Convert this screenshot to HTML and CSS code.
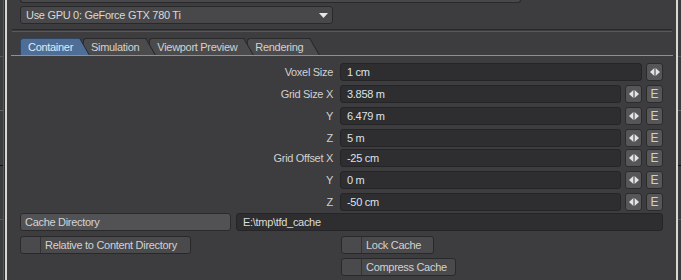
FILE: index.html
```html
<!DOCTYPE html>
<html>
<head>
<meta charset="utf-8">
<link rel="stylesheet" href="styles.css">
</head>
<body>
<div class="app">
  <div class="side">
    <div class="seg s1"></div>
    <div class="seg s2"></div>
    <div class="seg s3"></div>
    <div class="seg s4"></div>
  </div>
  <div class="rail rail-left"></div>
  <div class="panel">
    <div class="topbox"></div>
    <div class="dropdown">
      <span>Use GPU 0: GeForce GTX 780 Ti</span>
      <svg class="caret" width="9" height="5" viewBox="0 0 9 5"><path d="M0 0h9L4.5 5z" fill="#e6e6e6"/></svg>
    </div>
    <div class="groove"></div>
    <div class="tabs">
      <div class="tab active t1">Container</div>
      <div class="tab t2">Simulation</div>
      <div class="tab t3">Viewport Preview</div>
      <div class="tab t4">Rendering</div>
    </div>
    <div class="tabline"></div>

    <div class="group first">
      <div class="row">
        <div class="label">Voxel Size</div>
        <div class="field">1 cm</div>
        <div class="btn"><svg width="10" height="8" viewBox="0 0 10 8"><path d="M4.4 0v8L0 4z M5.6 0v8L10 4z" fill="#e4e4e4"/></svg></div>
      </div>
      <div class="row">
        <div class="label">Grid Size X</div>
        <div class="field">3.858 m</div>
        <div class="btn"><svg width="10" height="8" viewBox="0 0 10 8"><path d="M4.4 0v8L0 4z M5.6 0v8L10 4z" fill="#e4e4e4"/></svg></div>
        <div class="btn">E</div>
      </div>
      <div class="row">
        <div class="label">Y</div>
        <div class="field">6.479 m</div>
        <div class="btn"><svg width="10" height="8" viewBox="0 0 10 8"><path d="M4.4 0v8L0 4z M5.6 0v8L10 4z" fill="#e4e4e4"/></svg></div>
        <div class="btn">E</div>
      </div>
      <div class="row">
        <div class="label">Z</div>
        <div class="field">5 m</div>
        <div class="btn"><svg width="10" height="8" viewBox="0 0 10 8"><path d="M4.4 0v8L0 4z M5.6 0v8L10 4z" fill="#e4e4e4"/></svg></div>
        <div class="btn">E</div>
      </div>
    </div>

    <div class="group">
      <div class="row">
        <div class="label">Grid Offset X</div>
        <div class="field">-25 cm</div>
        <div class="btn"><svg width="10" height="8" viewBox="0 0 10 8"><path d="M4.4 0v8L0 4z M5.6 0v8L10 4z" fill="#e4e4e4"/></svg></div>
        <div class="btn">E</div>
      </div>
      <div class="row">
        <div class="label">Y</div>
        <div class="field">0 m</div>
        <div class="btn"><svg width="10" height="8" viewBox="0 0 10 8"><path d="M4.4 0v8L0 4z M5.6 0v8L10 4z" fill="#e4e4e4"/></svg></div>
        <div class="btn">E</div>
      </div>
      <div class="row">
        <div class="label">Z</div>
        <div class="field">-50 cm</div>
        <div class="btn"><svg width="10" height="8" viewBox="0 0 10 8"><path d="M4.4 0v8L0 4z M5.6 0v8L10 4z" fill="#e4e4e4"/></svg></div>
        <div class="btn">E</div>
      </div>
    </div>

    <div class="group">
      <div class="row">
        <div class="cache-btn">Cache Directory</div>
        <div class="field path">E:\tmp\tfd_cache</div>
      </div>
    </div>

    <div class="checks">
      <div class="check w-rel"><span class="box"></span><span class="ctext">Relative to Content Directory</span></div>
      <div class="check w-lock"><span class="box"></span><span class="ctext">Lock Cache</span></div>
      <div class="check w-comp c2"><span class="box"></span><span class="ctext">Compress Cache</span></div>
    </div>
  </div>
  <div class="rail rail-right"></div>
  <div class="side">
    <div class="seg s1"></div>
    <div class="seg s2"></div>
    <div class="seg s3"></div>
    <div class="seg s4"></div>
  </div>
</div>
</body>
</html>
```

FILE: styles.css
```css
* { box-sizing: border-box; }
html, body { margin: 0; padding: 0; }
body {
  background: #3d3d3f;
  font-family: "Liberation Sans", Arial, sans-serif;
  font-size: 11px;
  letter-spacing: -0.3px;
  color: #d2d2d2;
  overflow: hidden;
}
.app { display: flex; height: 280px; }

.side { width: 3px; background: #3b3c3f; display: flex; flex-direction: column; }
.seg { border-bottom: 1px solid #57585b; }
.s1 { height: 57px; }
.s2 { height: 54px; border-bottom-color: #66676a; }
.s3 { height: 55px; border-bottom-color: #111; }
.s4 { height: 54px; }

.rail-left { width: 4px; border-left: 1px solid #56575a; border-right: 2px solid #d8d8d0; background: #2e2e30; }
.rail-right { width: 2px; background: #d8d8d0; }

.panel {
  width: 669px;
  padding: 0 13px;
  display: flex;
  flex-direction: column;
  align-items: stretch;
}

.topbox {
  width: 501px;
  height: 3px;
  background: #48484a;
  border: 1px solid #29292b;
  border-top: 0;
  border-radius: 0 0 3px 3px;
}

.dropdown {
  margin-top: 3px;
  width: 313px;
  height: 18px;
  background: #48484a;
  border: 1px solid #29292b;
  border-radius: 3px;
  display: flex;
  align-items: center;
  justify-content: space-between;
  padding: 0 4px 0 5px;
  color: #d8d8d8;
}
.caret { display: block; }

.groove {
  margin: 5px -9px 0 -8px;
  height: 3px;
  border-top: 1px solid #28282a;
  border-bottom: 1px solid #58585a;
}

.tabs { margin-top: 6px; display: flex; height: 17px; }
.tab {
  position: relative;
  height: 17px;
  padding: 0 3px 0 7px;
  line-height: 16px;
  background: #4b4b4d;
  border: 1px solid #2a2a2c;
  border-right: 0;
  border-bottom: 0;
  border-radius: 3px 0 0 0;
  margin-right: 7px;
  color: #d2d2d2;
}
.tab::after {
  content: "";
  position: absolute;
  z-index: -1;
  top: -1px;
  bottom: 0;
  right: -4px;
  width: 14px;
  background: inherit;
  border-top: 1px solid #2a2a2c;
  border-right: 1px solid #222224;
  transform: skewX(30deg);
  transform-origin: 0 0;
}
.tab.active { background: #4e6e97; border-color: #33455e; color: #e4e9f1; }
.tab.active::after { border-top-color: #33455e; border-right-color: #222224; }
.t1 { z-index: 4; }
.t2 { z-index: 3; }
.t3 { z-index: 2; }
.t4 { z-index: 1; }

.tabline { margin: 0 -10px 0 -9px; height: 1px; background: #909092; }

.group { display: flex; flex-direction: column; gap: 4px; margin-top: 2px; }
.group.first { margin-top: 7px; }

.row { display: flex; height: 18px; }
.label {
  width: 313px;
  margin-right: 7px;
  text-align: right;
  line-height: 18px;
  color: #d0d0d0;
}
.field {
  flex: 1;
  background: #2e2e30;
  border: 1px solid #252527;
  border-radius: 3px;
  padding-left: 6px;
  line-height: 16px;
  color: #dde2ea;
}
.btn {
  width: 17px;
  margin-left: 4px;
  background: #565658;
  border: 1px solid #2b2b2d;
  border-radius: 3px;
  display: flex;
  align-items: center;
  justify-content: center;
  color: #cfcfcf;
  font-size: 12px;
  letter-spacing: 0;
}
.btn svg { display: block; }

.cache-btn {
  width: 211px;
  background: #525254;
  border: 1px solid #2a2a2c;
  border-radius: 3px;
  padding-left: 4px;
  line-height: 16px;
  color: #d4d4d4;
  margin-right: 5px;
}
.field.path { padding-left: 6px; color: #dcdcdc; }

.checks {
  margin-top: 5px;
  display: grid;
  grid-template-columns: 321px auto;
  row-gap: 4px;
  justify-items: start;
}
.check {
  display: flex;
  height: 18px;
  background: #4a4a4c;
  border: 1px solid #29292b;
  border-radius: 3px;
  color: #d2d2d2;
}
.check .box { width: 20px; border-right: 1px solid #333335; }
.check .ctext { padding-left: 4px; line-height: 16px; }
.w-rel { width: 171px; }
.w-lock { width: 93px; }
.w-comp { width: 115px; }
.c2 { grid-column: 2; }
```
